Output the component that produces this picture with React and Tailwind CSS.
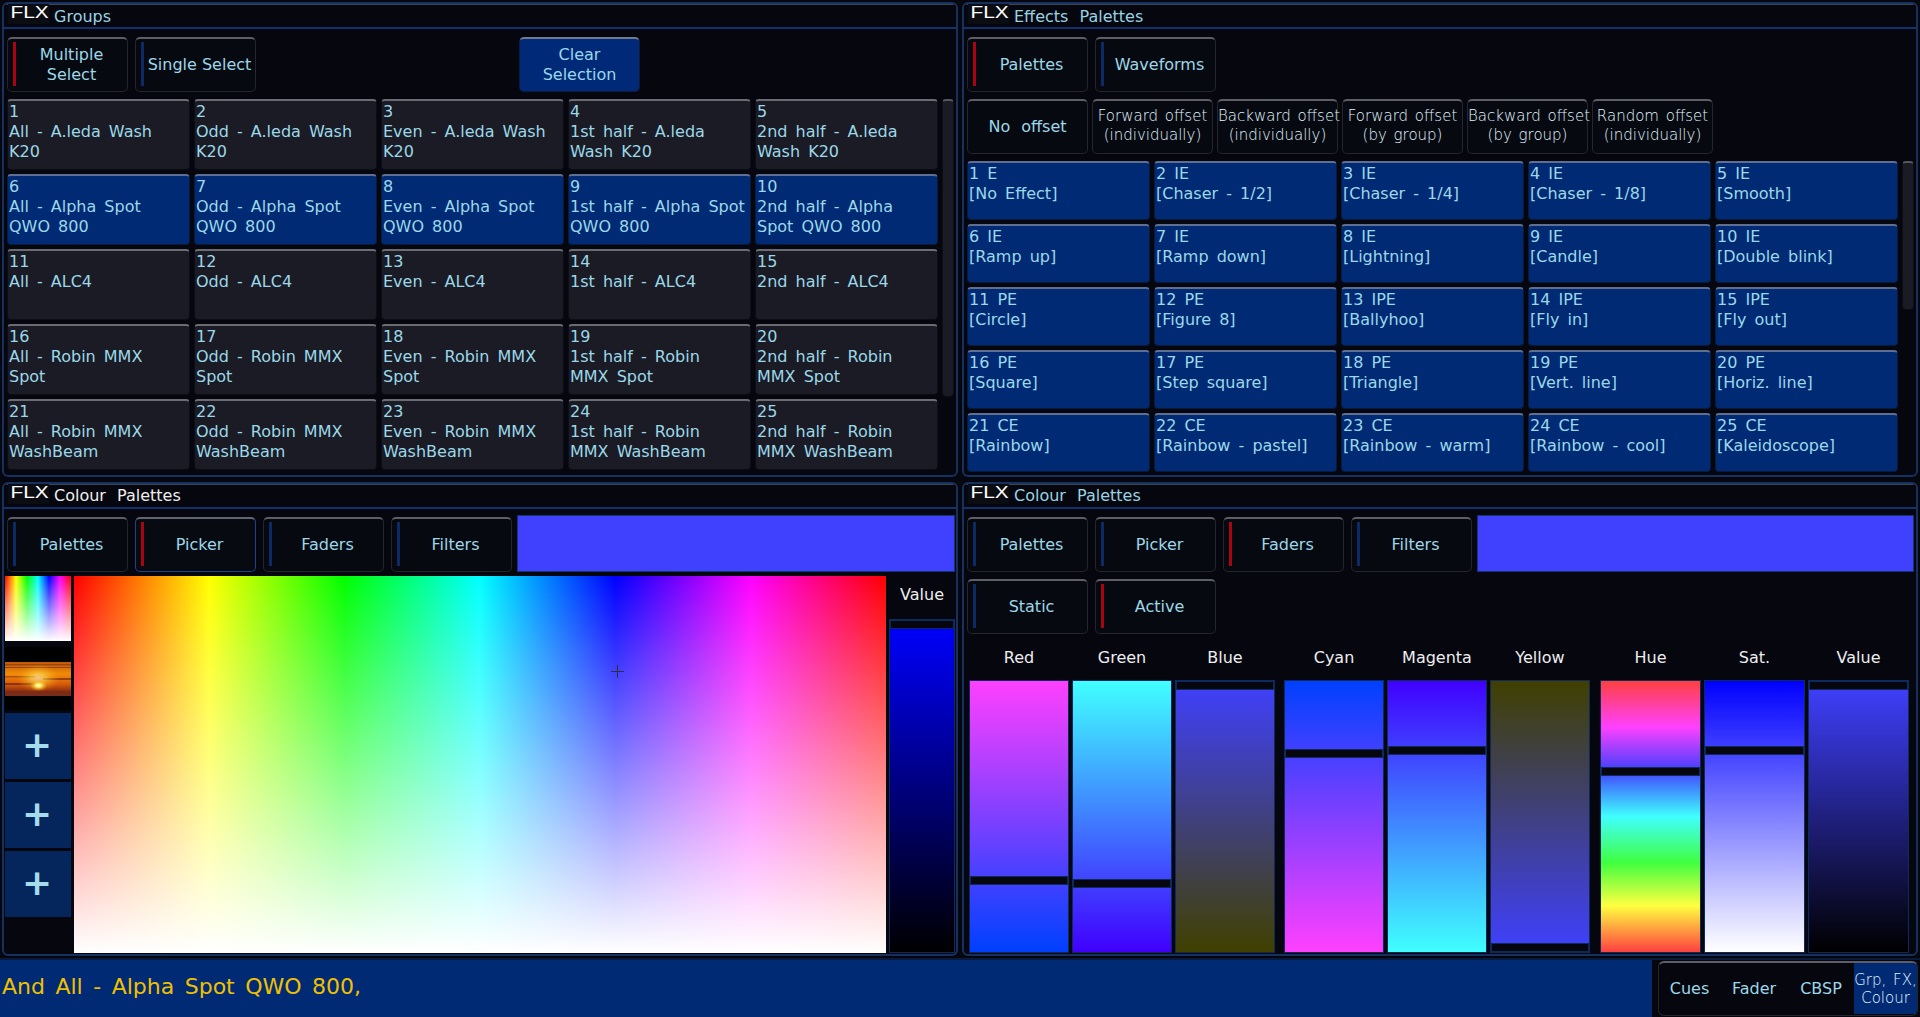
const groups = [
  "1\nAll - A.leda Wash\nK20","2\nOdd - A.leda Wash\nK20","3\nEven - A.leda Wash\nK20","4\n1st half - A.leda\nWash K20","5\n2nd half - A.leda\nWash K20",
  "6\nAll - Alpha Spot\nQWO 800","7\nOdd - Alpha Spot\nQWO 800","8\nEven - Alpha Spot\nQWO 800","9\n1st half - Alpha Spot\nQWO 800","10\n2nd half - Alpha\nSpot QWO 800",
  "11\nAll - ALC4","12\nOdd - ALC4","13\nEven - ALC4","14\n1st half - ALC4","15\n2nd half - ALC4",
  "16\nAll - Robin MMX\nSpot","17\nOdd - Robin MMX\nSpot","18\nEven - Robin MMX\nSpot","19\n1st half - Robin\nMMX Spot","20\n2nd half - Robin\nMMX Spot",
  "21\nAll - Robin MMX\nWashBeam","22\nOdd - Robin MMX\nWashBeam","23\nEven - Robin MMX\nWashBeam","24\n1st half - Robin\nMMX WashBeam","25\n2nd half - Robin\nMMX WashBeam",
];
const effects = [
  "1 E\n[No Effect]","2 IE\n[Chaser - 1/2]","3 IE\n[Chaser - 1/4]","4 IE\n[Chaser - 1/8]","5 IE\n[Smooth]",
  "6 IE\n[Ramp up]","7 IE\n[Ramp down]","8 IE\n[Lightning]","9 IE\n[Candle]","10 IE\n[Double blink]",
  "11 PE\n[Circle]","12 PE\n[Figure 8]","13 IPE\n[Ballyhoo]","14 IPE\n[Fly in]","15 IPE\n[Fly out]",
  "16 PE\n[Square]","17 PE\n[Step square]","18 PE\n[Triangle]","19 PE\n[Vert. line]","20 PE\n[Horiz. line]",
  "21 CE\n[Rainbow]","22 CE\n[Rainbow - pastel]","23 CE\n[Rainbow - warm]","24 CE\n[Rainbow - cool]","25 CE\n[Kaleidoscope]",
];
const offsets = ["Forward offset\n(individually)","Backward offset\n(individually)","Forward offset\n(by group)","Backward offset\n(by group)","Random offset\n(individually)"];

const sliders = [
  [
    { label: "Red", handle: 195, cls: "bg-[linear-gradient(to_bottom,#ff40ff,#0040ff)]" },
    { label: "Green", handle: 198, cls: "bg-[linear-gradient(to_bottom,#40ffff,#4000ff)]" },
    { label: "Blue", handle: 0, cls: "bg-[linear-gradient(to_bottom,#4040ff,#404000)]" },
  ],
  [
    { label: "Cyan", handle: 68, cls: "bg-[linear-gradient(to_bottom,#0040ff,#ff40ff)]" },
    { label: "Magenta", handle: 65, cls: "bg-[linear-gradient(to_bottom,#4000ff,#40ffff)]" },
    { label: "Yellow", handle: 262, cls: "bg-[linear-gradient(to_bottom,#404000,#4040ff)]" },
  ],
  [
    { label: "Hue", handle: 86, cls: "bg-[linear-gradient(to_bottom,#ff4040,#ff40ff_17%,#4040ff_33%,#40ffff_50%,#40ff40_67%,#ffff40_83%,#ff4040)]" },
    { label: "Sat.", handle: 65, cls: "bg-[linear-gradient(to_bottom,#0000ff,#ffffff)]" },
    { label: "Value", handle: 0, cls: "bg-[linear-gradient(to_bottom,#4040ff,#000000)]" },
  ],
];

function Logo() {
  return (
    <span className="w-[41px] h-[20px] -mt-[5px] ml-[4px] mr-[5px] bg-[#0b0d13] overflow-hidden shrink-0 block">
      <span className="block origin-left scale-x-[1.3] text-white text-[16px] leading-[18px] font-['Liberation_Sans',sans-serif] pl-[2px] [word-spacing:0]">FLX</span>
    </span>
  );
}

function Panel({ title, focused, children, lower }) {
  return (
    <section className="flex flex-col border-2 border-[#14315f] rounded-[6px] overflow-hidden bg-[#05060e]">
      <header className={"h-[25px] shrink-0 flex items-center border-t border-t-[#3d4452] border-b-2 border-b-[#12316a] bg-[#05060e] text-[16px] [word-spacing:6px] " + (focused ? "text-[#eeeeee]" : "text-[#98d4e4]")}>
        <Logo />
        <span className={lower ? "" : "pt-[2px]"}>{title}</span>
      </header>
      {children}
    </section>
  );
}

function TabButton({ children, mark, focused, active, className = "", thin }) {
  const bar = mark === "red" ? "bg-[#a80412]" : "bg-[#0b2a66]";
  return (
    <button
      className={
        "relative shrink-0 w-[121px] h-[55px] rounded-[5px] border border-t-2 text-center whitespace-pre " +
        (mark ? "pl-[8px] " : "") +
        (active
          ? "bg-[#002a78] border-[#0b1c40] border-t-[#6f7a92] "
          : focused
          ? "bg-[#080a12] border-[#1a4488] border-t-[#5f6670] "
          : "bg-[#070911] border-[#24262c] border-t-[#5d5e66] ") +
        (thin
          ? "font-extralight text-[15px] leading-[19px] text-[#e0f8ff] [word-spacing:2px] pb-[2px] "
          : "text-[16px] leading-[20px] text-[#9cd8e8] ") +
        className
      }
    >
      {mark && <span className={"absolute left-[5px] top-[3px] w-[3px] h-[44px] " + bar} />}
      {children}
    </button>
  );
}

function GridButton({ text, active, h }) {
  return (
    <div
      className={
        "w-[183px] text-left pl-[1px] pt-[1px] rounded-[4px] border border-t-2 whitespace-pre text-[16px] leading-[20px] text-[#9cd8e8] overflow-hidden " +
        h + " " +
        (active
          ? "bg-[#002a74] border-[#0a1a3c] border-t-[#5e6f92]"
          : "bg-[#1a1b25] border-[#0d0e14] border-t-[#6a6b73]")
      }
    >
      {text}
    </div>
  );
}

function Scrollbar({ className }) {
  return <div className={"w-[12px] rounded-[4px] bg-[#1a1b25] border border-[#0d0e14] border-t-2 border-t-[#55565e] " + className} />;
}

function Slider({ handle, cls, w = "w-[100px]", h = "h-[273px]" }) {
  return (
    <div className={"relative border border-[#0c2a5e] " + w + " " + h + " " + cls}>
      <div className="absolute inset-x-0 h-[9px] bg-[#05060e] border border-[#0c2a5e]" style={{ top: handle }} />
    </div>
  );
}

const pictureBg = "bg-[image:linear-gradient(to_bottom,rgba(255,255,255,0),#ffffff),linear-gradient(to_right,#ff0000,#ffff00,#00ff00,#00ffff,#0000ff,#ff00ff,#ff0000)]";

function PlusBox() {
  return (
    <div className="w-[66px] h-[66px] bg-[#05265c] flex items-center justify-center text-[#a4dcec] text-[36px] font-bold leading-none pr-[2px] pb-[2px]">+</div>
  );
}

export default function App() {
  return (
    <div className="w-[1920px] h-[1017px] bg-[#05060e] flex flex-col overflow-hidden font-['DejaVu_Sans',sans-serif] [word-spacing:3px]">
      <div className="grid grid-cols-[956px_956px] grid-rows-[475px_474px] gap-x-[4px] gap-y-[5px] pt-[2px] px-[2px] h-[958px]">
        <Panel title="Groups">
          <div className="flex gap-[7px] pt-[8px] pl-[3px]">
            <TabButton mark="red">{"Multiple\nSelect"}</TabButton>
            <TabButton mark="blue">Single Select</TabButton>
            <TabButton active className="ml-[256px]">{"Clear\nSelection"}</TabButton>
          </div>
          <div className="flex gap-[4px] pt-[7px] pl-[3px]">
            <div className="grid grid-cols-[repeat(5,183px)] gap-[4px]">
              {groups.map((t, i) => (
                <GridButton key={i} text={t} active={i >= 5 && i < 10} h="h-[71px]" />
              ))}
            </div>
            <Scrollbar className="h-[298px]" />
          </div>
        </Panel>

        <Panel title="Effects Palettes">
          <div className="flex gap-[7px] pt-[8px] pl-[3px]">
            <TabButton mark="red">Palettes</TabButton>
            <TabButton mark="blue">Waveforms</TabButton>
          </div>
          <div className="flex gap-[4px] pt-[7px] pl-[3px]">
            <TabButton className="[word-spacing:6px]">No offset</TabButton>
            {offsets.map((t) => (
              <TabButton key={t} thin>{t}</TabButton>
            ))}
          </div>
          <div className="flex gap-[4px] pt-[7px] pl-[3px]">
            <div className="grid grid-cols-[repeat(5,183px)] gap-[4px]">
              {effects.map((t, i) => (
                <GridButton key={i} text={t} active h="h-[59px]" />
              ))}
            </div>
            <Scrollbar className="h-[149px]" />
          </div>
        </Panel>

        <Panel title="Colour Palettes" focused lower>
          <div className="flex gap-[7px] pt-[8px] pl-[3px]">
            <TabButton mark="blue">Palettes</TabButton>
            <TabButton mark="red" focused>Picker</TabButton>
            <TabButton mark="blue">Faders</TabButton>
            <TabButton mark="blue">Filters</TabButton>
            <div className="w-[438px] h-[57px] -mt-[2px] -ml-[2px] bg-[#4040ff] border border-[#12366f]" />
          </div>
          <div className="flex gap-[3px] pt-[4px] pl-[1px]">
            <div className="w-[66px] flex flex-col">
              <div className={"h-[65px] " + pictureBg} />
              <div className="h-[6px]" />
              <div className="h-[63px] bg-black flex items-center">
                <svg viewBox="0 0 66 34" className="block w-[66px] h-[34px]" preserveAspectRatio="none">
                  <defs>
                    <linearGradient id="sky" x1="0" y1="0" x2="0" y2="1">
                      <stop offset="0" stopColor="#c05808" />
                      <stop offset="0.35" stopColor="#f08c08" />
                      <stop offset="0.65" stopColor="#d85a08" />
                      <stop offset="0.85" stopColor="#903010" />
                      <stop offset="1" stopColor="#7a2c18" />
                    </linearGradient>
                    <radialGradient id="glow" cx="0.5" cy="0.5" r="0.5">
                      <stop offset="0" stopColor="#ffffff" />
                      <stop offset="0.3" stopColor="#fff060" />
                      <stop offset="1" stopColor="#ffa000" stopOpacity="0" />
                    </radialGradient>
                  </defs>
                  <rect width="66" height="34" fill="url(#sky)" />
                  <rect y="2" width="66" height="1.5" fill="#8a3a08" opacity="0.7" />
                  <rect y="5" width="66" height="1" fill="#7a2c06" opacity="0.7" />
                  <rect y="14" width="30" height="1.5" fill="#8a3208" opacity="0.6" />
                  <rect x="38" y="16" width="28" height="2" fill="#7a2c06" opacity="0.7" />
                  <rect y="21" width="30" height="2" fill="#6c2408" opacity="0.7" />
                  <ellipse cx="33" cy="16" rx="22" ry="14" fill="url(#glow)" opacity="0.55" />
                  <ellipse cx="33.5" cy="23.5" rx="9" ry="5.5" fill="url(#glow)" />
                  <rect y="29" width="66" height="5" fill="#7a2c18" />
                </svg>
              </div>
              <div className="h-[3px]" />
              <div className="flex flex-col gap-[3px]">
                <PlusBox />
                <PlusBox />
                <PlusBox />
              </div>
            </div>
            <div className={"relative w-[812px] h-[377px] " + pictureBg}>
              <div className="absolute left-[537px] top-[95px] w-[13px] h-px bg-[#30303a]" />
              <div className="absolute left-[543px] top-[89px] w-px h-[13px] bg-[#30303a]" />
            </div>
            <div className="w-[66px] flex flex-col">
              <div className="h-[43px] flex items-center justify-center text-[16px] text-[#eeeeee] pb-[5px]">Value</div>
              <Slider w="w-[66px]" h="h-[334px]" handle={0} cls="bg-[linear-gradient(to_bottom,#0000ff,#000000)]" />
            </div>
          </div>
        </Panel>

        <Panel title="Colour Palettes" lower>
          <div className="flex gap-[7px] pt-[8px] pl-[3px]">
            <TabButton mark="blue">Palettes</TabButton>
            <TabButton mark="blue">Picker</TabButton>
            <TabButton mark="red">Faders</TabButton>
            <TabButton mark="blue">Filters</TabButton>
            <div className="w-[437px] h-[57px] -mt-[2px] -ml-[2px] bg-[#4040ff] border border-[#12366f]" />
          </div>
          <div className="flex gap-[7px] pt-[7px] pl-[3px]">
            <TabButton mark="blue">Static</TabButton>
            <TabButton mark="red">Active</TabButton>
          </div>
          <div className="flex pl-[5px]">
            {sliders.map((group, g) => (
              <div key={g} className={"flex gap-[3px] " + (g === 1 ? "ml-[9px]" : g === 2 ? "ml-[10px]" : "")}>
                {group.map((s) => (
                  <div key={s.label} className="flex flex-col">
                    <div className="h-[46px] flex items-center justify-center text-[16px] text-[#eeeeee] pt-[1px]">{s.label}</div>
                    <Slider handle={s.handle} cls={s.cls} w={g === 2 ? "w-[101px]" : "w-[100px]"} />
                  </div>
                ))}
              </div>
            ))}
          </div>
        </Panel>
      </div>

      <footer className="flex-1 bg-[#002a74] flex items-center justify-between border-t-2 border-t-[#0a1a3c]">
        <span className="pl-[2px] pb-[4px] text-[22px] text-[#f0c000] [word-spacing:3.5px]">And All - Alpha Spot QWO 800,</span>
        <div className="w-[268px] self-stretch bg-[#05060e] flex items-stretch pl-[6px] pr-[2px] pt-[1px] pb-[1px]">
          <div className="flex-1 flex rounded-[6px] border border-t-2 border-[#24262c] border-t-[#5d5e66] overflow-hidden text-[16px] text-[#9cd8e8] pb-[1px]">
            <div className="w-[61px] flex items-center justify-center">Cues</div>
            <div className="w-[68px] flex items-center justify-center">Fader</div>
            <div className="w-[66px] flex items-center justify-center">CBSP</div>
            <div className="flex-1 flex items-center justify-center text-center bg-[#002a74] whitespace-pre font-extralight text-[15px] leading-[18px] text-[#e0f8ff] [word-spacing:2px]">{"Grp, FX,\nColour"}</div>
          </div>
        </div>
      </footer>
    </div>
  );
}
